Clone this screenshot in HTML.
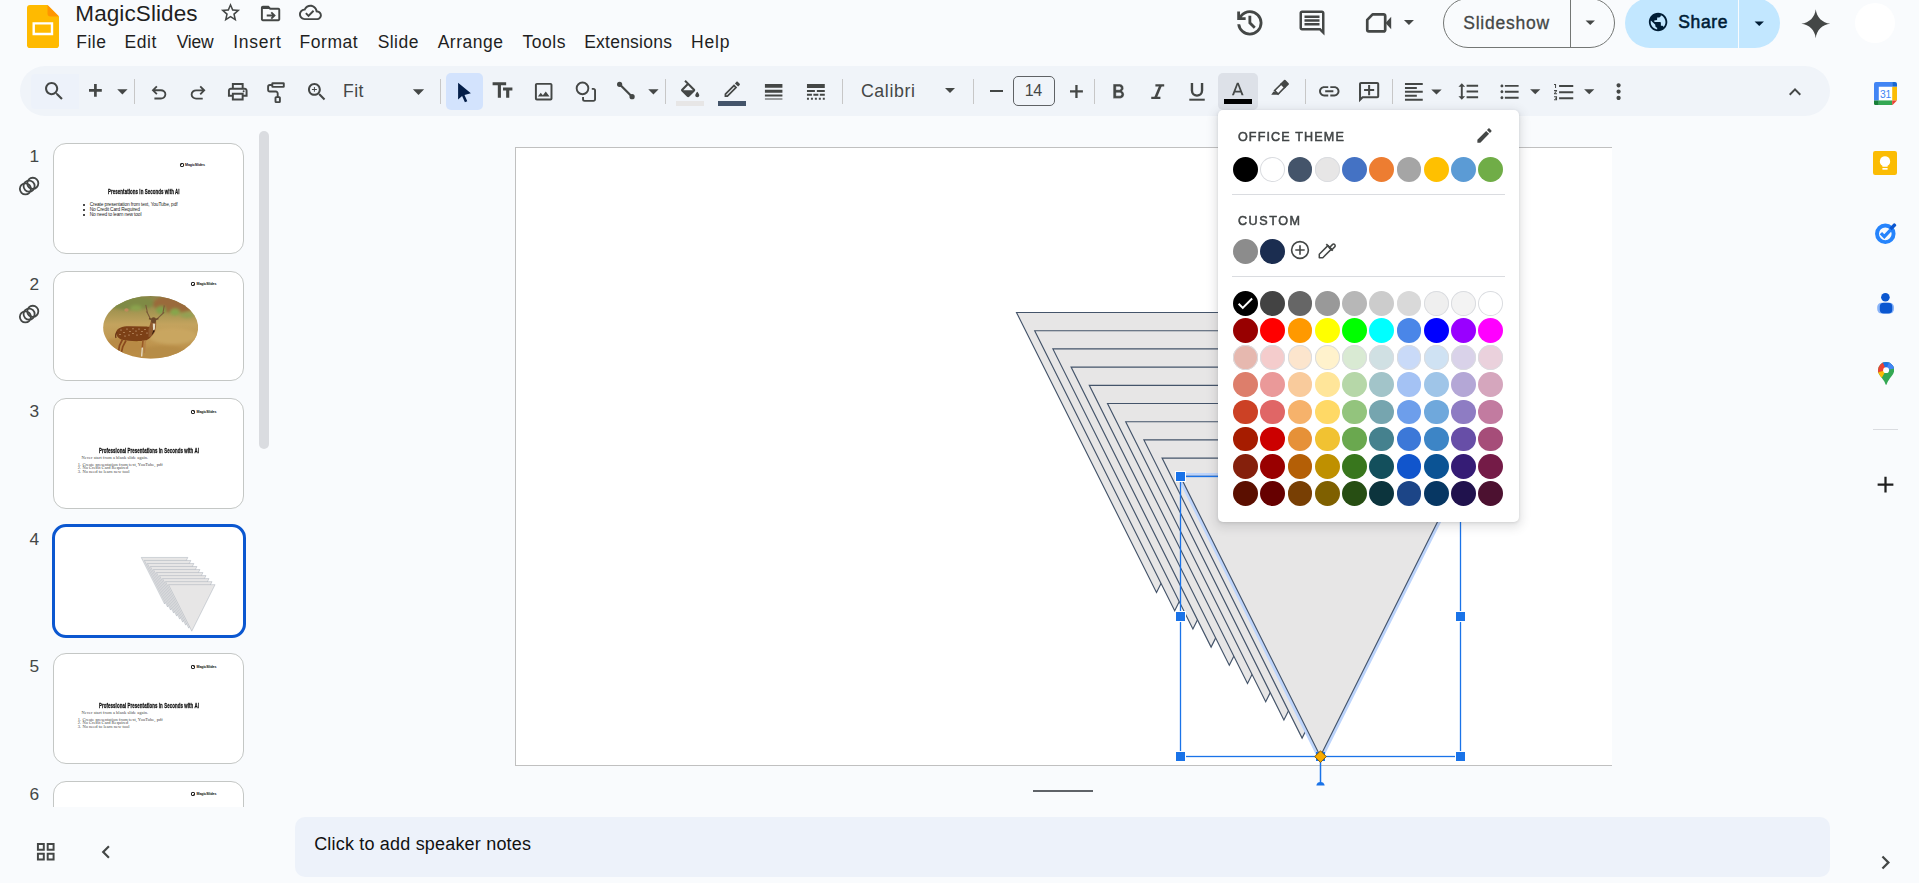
<!DOCTYPE html><html><head><meta charset="utf-8"><title>MagicSlides - Google Slides</title><style>
*{box-sizing:border-box;margin:0;padding:0}
html,body{width:1919px;height:883px;overflow:hidden;background:#f9fbfd;font-family:"Liberation Sans",sans-serif}
.ic{position:absolute;display:block}
.t{position:absolute;white-space:nowrap}
.abs{position:absolute}
.sep{position:absolute;width:1px;background:#c7c7c7;top:79px;height:25px}
</style></head><body>
<svg class="ic" style="left:26.8px;top:4.5px;width:32px;height:43.2px" viewBox="0 0 32 43.2">
<path d="M3 0H20.5L32 11.5V40.200a3 3 0 0 1-3 3H3a3 3 0 0 1-3-3V3a3 3 0 0 1 3-3z" fill="#ffba00"/>
<path d="M20.5 0L32 11.500H23.500a3 3 0 0 1-3-3z" fill="#ff9500"/>
<path d="M5.5 17.2h20.7v13H5.5zM7.900 19.600v8.200h15.900v-8.200z" fill="#fff" fill-rule="evenodd"/>
</svg>
<div class="t k ttl" style="left:75.31px;top:0.74px;font-size:22.5px;line-height:25.85px;color:#1f1f1f;font-weight:400;letter-spacing:0.097px;">MagicSlides</div>
<svg class="ic" style="left:219.04px;top:1.12px;width:23.02px;height:23.02px" viewBox="0 0 24 24" fill="#444746"><path d="M22 9.24l-7.19-.62L12 2 9.19 8.630 2 9.240l5.46 4.73L5.82 21 12 17.270 18.180 21l-1.630-7.030L22 9.240zM12 15.400l-3.760 2.270 1-4.280-3.320-2.880 4.380-.380L12 6.100l1.710 4.040 4.380.380-3.320 2.880 1 4.280L12 15.400z"/></svg>
<svg class="ic" style="left:258.91px;top:1.86px;width:23.17px;height:23.17px" viewBox="0 0 24 24" fill="#444746"><path d="M2 7.300H12V6l-2-2H4.500A2.500 2.500 0 0 0 2 6.500z M20 6h-8l-2-2H4c-1.1 0-2 .9-2 2v12c0 1.1.9 2 2 2h16c1.1 0 2-.9 2-2V8c0-1.1-.9-2-2-2zm0 12H4V6h5.170l2 2H20v10zm-7.990-1.410L13.420 18l4-4-4-4-1.410 1.410L13.590 13H8v2h5.590z"/></svg>
<svg class="ic" style="left:299.18px;top:1.38px;width:22.85px;height:22.85px" viewBox="0 0 24 24" fill="#444746"><path d="M19.35 10.040C18.670 6.590 15.640 4 12 4 9.110 4 6.600 5.640 5.350 8.040 2.340 8.360 0 10.910 0 14c0 3.310 2.690 6 6 6h13c2.760 0 5-2.240 5-5 0-2.640-2.050-4.780-4.650-4.960zM19 18H6c-2.210 0-4-1.790-4-4 0-2.050 1.530-3.760 3.560-3.970l1.070-.110.500-.950C8.080 7.140 9.940 6 12 6c2.620 0 4.880 1.860 5.390 4.430l.300 1.500 1.530.110c1.560.100 2.780 1.410 2.780 2.960 0 1.650-1.350 3-3 3zm-9-3.820l-2.090-2.090L6.500 13.500 10 17l6.010-6.010-1.410-1.410z"/></svg>
<div class="t k mn" style="left:76.32px;top:31.96px;font-size:17.5px;line-height:20.11px;color:#1f1f1f;font-weight:400;letter-spacing:0.463px;">File</div>
<div class="t k mn" style="left:124.42px;top:31.96px;font-size:17.5px;line-height:20.11px;color:#1f1f1f;font-weight:400;letter-spacing:0.576px;">Edit</div>
<div class="t k mn" style="left:176.70px;top:31.96px;font-size:17.5px;line-height:20.11px;color:#1f1f1f;font-weight:400;letter-spacing:-0.242px;">View</div>
<div class="t k mn" style="left:233.20px;top:31.96px;font-size:17.5px;line-height:20.11px;color:#1f1f1f;font-weight:400;letter-spacing:0.760px;">Insert</div>
<div class="t k mn" style="left:299.56px;top:31.96px;font-size:17.5px;line-height:20.11px;color:#1f1f1f;font-weight:400;letter-spacing:0.527px;">Format</div>
<div class="t k mn" style="left:377.64px;top:31.96px;font-size:17.5px;line-height:20.11px;color:#1f1f1f;font-weight:400;letter-spacing:0.457px;">Slide</div>
<div class="t k mn" style="left:437.67px;top:31.96px;font-size:17.5px;line-height:20.11px;color:#1f1f1f;font-weight:400;letter-spacing:0.503px;">Arrange</div>
<div class="t k mn" style="left:522.56px;top:31.96px;font-size:17.5px;line-height:20.11px;color:#1f1f1f;font-weight:400;letter-spacing:0.518px;">Tools</div>
<div class="t k mn" style="left:584.13px;top:31.96px;font-size:17.5px;line-height:20.11px;color:#1f1f1f;font-weight:400;letter-spacing:0.247px;">Extensions</div>
<div class="t k mn" style="left:690.96px;top:31.96px;font-size:17.5px;line-height:20.11px;color:#1f1f1f;font-weight:400;letter-spacing:0.829px;">Help</div>
<svg class="ic" style="left:1232.63px;top:5.53px;width:33.73px;height:33.73px" viewBox="0 0 24 24" fill="#444746"><path d="M12 21q-3.45 0-6.012-2.287Q3.425 16.425 3.05 13H5.1q.35 2.6 2.313 4.3Q9.375 19 12 19q2.925 0 4.963-2.037Q19 14.925 19 12t-2.037-4.963Q14.925 5 12 5q-1.725 0-3.225.8Q7.275 6.6 6.25 8H9v2H3V4h2v2.35q1.275-1.6 3.113-2.475Q9.95 3 12 3q1.875 0 3.513.713 1.637.712 2.850 1.925 1.212 1.212 1.925 2.85Q21 10.125 21 12t-.712 3.513q-.713 1.637-1.925 2.85-1.213 1.212-2.850 1.925Q13.875 21 12 21Zm2.800-4.800L11 12.4V7h2v4.600l3.200 3.200Z"/></svg>
<svg class="ic" style="left:1296.50px;top:7.90px;width:30.00px;height:30.00px" viewBox="0 0 24 24" fill="#444746"><path d="M21.990 4c0-1.100-.890-2-1.990-2H4c-1.100 0-2 .900-2 2v12c0 1.100.900 2 2 2h14l4 4-.010-18zM20 4v13.170L18.830 16H4V4h16zM6 12h12v2H6zm0-3h12v2H6zm0-3h12v2H6z"/></svg>
<svg class="ic" style="left:1364px;top:10px;width:30px;height:26px" viewBox="1364 10 30 26"><path d="M1367.250 19.900L1372.600 14.350H1383.600a1.600 1.600 0 0 1 1.600 1.600V29.850a1.600 1.600 0 0 1-1.600 1.600H1368.850a1.600 1.600 0 0 1-1.600-1.600z" fill="none" stroke="#444746" stroke-width="2.700" stroke-linejoin="round"/><path d="M1385.500 22.900L1391.200 16.700V29.200z" fill="#444746"/></svg>
<svg class="ic" style="left:1397.01px;top:10.06px;width:23.88px;height:23.88px" viewBox="0 0 24 24" fill="#444746"><path d="M7 10l5 5 5-5z"/></svg>
<div class="abs" style="left:1443px;top:-2.5px;width:172px;height:50px;border:1px solid #747775;border-radius:25px"></div>
<div class="abs" style="left:1570px;top:-2px;width:1px;height:49px;background:#747775"></div>
<div class="t k ss" style="left:1463.26px;top:13.06px;font-size:17.5px;line-height:20.11px;color:#444746;font-weight:400;letter-spacing:0.779px;-webkit-text-stroke:.3px #444746;">Slideshow</div>
<svg class="ic" style="left:1579.25px;top:11.25px;width:22.5px;height:22.5px" viewBox="0 0 24 24" fill="#444746" ><path d="M7 10l5 5 5-5z"/></svg>
<div class="abs" style="left:1625px;top:-2.5px;width:155px;height:50.5px;background:#c2e7ff;border-radius:25px"></div>
<div class="abs" style="left:1738px;top:-2px;width:1px;height:50px;background:#f9fbfd"></div>
<svg class="ic" style="left:1646.60px;top:11.30px;width:22.2px;height:22.2px" viewBox="0 0 24 24" fill="#001d35" ><path d="M12 2C6.480 2 2 6.480 2 12s4.480 10 10 10 10-4.480 10-10S17.520 2 12 2zm-1 17.930c-3.950-.490-7-3.850-7-7.930 0-.620.080-1.210.210-1.790L9 15v1c0 1.100.900 2 2 2v1.930zm6.900-2.540c-.260-.810-1-1.390-1.900-1.390h-1v-3c0-.550-.450-1-1-1H8v-2h2c.550 0 1-.450 1-1V7h2c1.100 0 2-.900 2-2v-.410c2.930 1.190 5 4.060 5 7.410 0 2.080-.800 3.970-2.100 5.390z"/></svg>
<div class="t k sh" style="left:1678.34px;top:12.06px;font-size:17.5px;line-height:20.11px;color:#001d35;font-weight:400;letter-spacing:0.596px;-webkit-text-stroke:.55px #001d35;">Share</div>
<svg class="ic" style="left:1747.75px;top:11.75px;width:22.5px;height:22.5px" viewBox="0 0 24 24" fill="#001d35" ><path d="M7 10l5 5 5-5z"/></svg>
<svg class="ic" style="left:1799.85px;top:7.55px;width:31.5px;height:31.5px" viewBox="0 0 24 24" fill="#444746" ><path d="M12 1 C12.6 7 17 11.400 23 12 C17 12.600 12.600 17 12 23 C11.400 17 7 12.600 1 12 C7 11.400 11.400 7 12 1z"/></svg>
<div class="abs" style="left:1855px;top:3px;width:40px;height:40px;border-radius:50%;background:#fff"></div>
<div class="abs" style="left:20px;top:66px;width:1810px;height:49.5px;border-radius:25px;background:#f0f4f9"></div>
<div class="abs" style="left:31px;top:74px;width:47.5px;height:34.5px;background:#edf2fa;border-radius:4px 0 0 4px"></div>
<div class="abs" style="left:445.800px;top:73px;width:37.100px;height:37px;border-radius:5px;background:#d3e3fd"></div>
<div class="abs" style="left:1218.100px;top:73.200px;width:39.800px;height:36.400px;border-radius:5px;background:#dde1e8"></div>
<svg class="ic" style="left:41.96px;top:79.06px;width:24.29px;height:24.29px" viewBox="0 0 24 24" fill="#444746"><path d="M15.5 14h-.79l-.28-.27C15.41 12.59 16 11.11 16 9.5 16 5.91 13.09 3 9.5 3S3 5.91 3 9.5 5.91 16 9.5 16c1.61 0 3.09-.59 4.23-1.57l.27.28v.79l5 4.99L20.49 19l-4.99-5zm-6 0C7.01 14 5 11.99 5 9.5S7.01 5 9.5 5 14 7.01 14 9.5 11.99 14 9.5 14z"/></svg>
<svg class="ic" style="left:88.800px;top:84px;width:12.800px;height:12.800px" viewBox="0 0 12.800 12.800"><path d="M0 6.400h12.800M6.400 0v12.800" stroke="#444746" stroke-width="2.700" fill="none"/></svg>
<svg class="ic" style="left:109.53px;top:78.69px;width:24.78px;height:24.78px" viewBox="0 0 24 24" fill="#444746"><path d="M7 10l5 5 5-5z"/></svg>
<svg class="ic" style="left:147.76px;top:81.97px;width:21.97px;height:21.97px" viewBox="0 0 24 24" fill="#444746"><path d="M7 19v-2h7.1q1.575 0 2.737-1Q18 15 18 13.5T16.837 11Q15.675 10 14.1 10H7.8l2.6 2.6L9 14 4 9l5-5 1.4 1.4L7.8 8h6.3q2.425 0 4.163 1.575Q20 11.15 20 13.5q0 2.35-1.737 3.925Q16.525 19 14.1 19Z"/></svg>
<svg class="ic" style="left:186.70px;top:81.81px;width:22.20px;height:22.20px" viewBox="0 0 24 24" fill="#444746"><path d="M9.9 19q-2.425 0-4.163-1.575Q4 15.85 4 13.5q0-2.35 1.737-3.925Q7.475 8 9.9 8h6.3l-2.6-2.6L15 4l5 5-5 5-1.4-1.4 2.6-2.6H9.9q-1.575 0-2.737 1Q6 12 6 13.5T7.163 16q1.162 1 2.737 1H17v2Z"/></svg>
<svg class="ic" style="left:225.84px;top:79.69px;width:23.52px;height:23.52px" viewBox="0 0 24 24" fill="#444746"><path d="M19 8h-1V3H6v5H5c-1.66 0-3 1.34-3 3v6h4v4h12v-4h4v-6c0-1.66-1.34-3-3-3zM8 5h8v3H8V5zm8 12v2H8v-4h8v2zm2-2v-2H6v2H4v-4c0-.55.45-1 1-1h14c.55 0 1 .45 1 1v4h-2z M17 11.5a1 1 0 1 0 2 0a1 1 0 1 0-2 0z"/></svg>
<svg class="ic" style="left:264px;top:80px;width:24px;height:24px" viewBox="0 0 24 24" fill="none" stroke="#444746" stroke-width="1.900" stroke-linejoin="round"><rect x="8.300" y="3.200" width="11.500" height="3.700" rx=".4"/><path d="M8.300 5H5.900a1.800 1.800 0 0 0-1.800 1.800v2.900a1.800 1.800 0 0 0 1.800 1.800h5.900a1.900 1.900 0 0 1 1.900 1.900v3.500"/><rect x="11.500" y="17.100" width="4.400" height="5" rx=".6"/></svg>
<svg class="ic" style="left:304.63px;top:79.83px;width:23.74px;height:23.74px" viewBox="0 0 24 24" fill="#444746"><path d="M15.5 14h-.79l-.28-.27C15.41 12.59 16 11.11 16 9.5 16 5.91 13.09 3 9.5 3S3 5.91 3 9.5 5.91 16 9.5 16c1.61 0 3.09-.59 4.23-1.57l.27.28v.79l5 4.99L20.49 19l-4.99-5zm-6 0C7.01 14 5 11.99 5 9.5S7.01 5 9.5 5 14 7.01 14 9.5 11.99 14 9.5 14zm.5-7H9v2H7v1h2v2h1v-2h2V9h-2z"/></svg>
<svg class="ic" style="left:405.05px;top:77.74px;width:27.00px;height:27.00px" viewBox="0 0 24 24" fill="#444746"><path d="M7 10l5 5 5-5z"/></svg>
<svg class="ic" style="left:451px;top:79.500px;width:24px;height:24px" viewBox="0 0 24 24"><path d="M7.100 2.700V19.400L11.100 15.900 13.900 22.300 16.300 21.200 13.500 14.900 19.900 13.200z" fill="#041e49"/></svg>
<svg class="ic" style="left:490.09px;top:78.42px;width:25.01px;height:25.01px" viewBox="0 0 24 24" fill="#444746"><path d="M2.5 4v3h5v12h3V7h5V4h-13zm19 5h-9v3h3v7h3v-7h3V9z"/></svg>
<svg class="ic" style="left:531.80px;top:80.20px;width:23.40px;height:23.40px" viewBox="0 0 24 24" fill="#444746"><path d="M19 5v14H5V5h14m0-2H5c-1.1 0-2 .9-2 2v14c0 1.1.9 2 2 2h14c1.1 0 2-.9 2-2V5c0-1.1-.9-2-2-2zm-4.86 8.86l-3 3.87L9 13.14 6 17h12l-3.86-5.14z"/></svg>
<svg class="ic" style="left:574px;top:80px;width:24px;height:24px" viewBox="574 80 24 24" fill="none" stroke="#444746" stroke-width="1.900"><circle cx="582.500" cy="88.350" r="5.850"/><path d="M591.800 88.850H593.500a1.550 1.550 0 0 1 1.550 1.550V99.300a1.550 1.550 0 0 1-1.550 1.550H584.600a1.550 1.550 0 0 1-1.550-1.550V97.100"/></svg>
<svg class="ic" style="left:614px;top:80px;width:24px;height:24px" viewBox="614 80 24 24"><path d="M619.600 84.300L632.100 96.700" stroke="#444746" stroke-width="2.300"/><circle cx="619.600" cy="84.300" r="2.600" fill="#444746"/><circle cx="632.100" cy="96.700" r="2.600" fill="#444746"/></svg>
<svg class="ic" style="left:640.63px;top:78.66px;width:24.84px;height:24.84px" viewBox="0 0 24 24" fill="#444746"><path d="M7 10l5 5 5-5z"/></svg>
<svg class="ic" style="left:677.83px;top:79.93px;width:24.34px;height:24.34px" viewBox="0 0 24 24" fill="#444746"><path d="M16.56 8.94L7.62 0 6.21 1.41l2.38 2.38-5.15 5.15c-.59.59-.59 1.54 0 2.12l5.5 5.5c.29.29.68.44 1.06.44s.77-.15 1.06-.44l5.5-5.5c.59-.58.59-1.53 0-2.12zM5.21 10L10 5.21 14.79 10H5.21zM19 11.5s-2 2.17-2 3.500c0 1.1.9 2 2 2s2-.9 2-2c0-1.33-2-3.5-2-3.5z"/></svg>
<div class="abs" style="left:676px;top:101px;width:28px;height:4.800px;background:#e7e6e6"></div>
<svg class="ic" style="left:721.83px;top:79.33px;width:20.53px;height:20.53px" viewBox="0 0 24 24" fill="#444746"><path d="M14.06 9.02l.92.92L5.92 19H5v-.92l9.060-9.060M17.660 3c-.25 0-.51.1-.7.29l-1.830 1.830 3.750 3.750 1.830-1.830c.39-.39.39-1.020 0-1.410l-2.340-2.340c-.2-.2-.45-.29-.71-.29zm-3.600 3.190L3 17.250V21h3.750L17.810 9.940l-3.750-3.750z"/></svg>
<div class="abs" style="left:718px;top:101px;width:28px;height:4.800px;background:#44546a"></div>
<svg class="ic" style="left:762.28px;top:79.93px;width:23.33px;height:23.33px" viewBox="0 0 24 24" fill="#444746"><path d="M3 17h18v-2H3v2zm0 3h18v-1H3v1zm0-7h18v-3H3v3zm0-9v4h18V4H3z"/></svg>
<svg class="ic" style="left:804.38px;top:80.00px;width:23.75px;height:23.75px" viewBox="0 0 24 24" fill="#444746"><path d="M3 16h5v-2H3v2zm6.5 0h5v-2h-5v2zm6.5 0h5v-2h-5v2zM3 20h2v-2H3v2zm4 0h2v-2H7v2zm4 0h2v-2h-2v2zm4 0h2v-2h-2v2zm4 0h2v-2h-2v2zM3 12h8v-2H3v2zm10 0h8v-2h-8v2zM3 4v4h18V4H3z"/></svg>
<svg class="ic" style="left:938.00px;top:77.90px;width:24.00px;height:24.00px" viewBox="0 0 24 24" fill="#444746"><path d="M7 10l5 5 5-5z"/></svg>
<div class="abs" style="left:990px;top:90px;width:12.900px;height:2.300px;background:#444746"></div>
<svg class="ic" style="left:1070px;top:85px;width:12.900px;height:12.900px" viewBox="0 0 12.900 12.900"><path d="M0 6.450h12.900M6.450 0v12.900" stroke="#444746" stroke-width="2.300" fill="none"/></svg>
<svg class="ic" style="left:1105.55px;top:79.70px;width:24.54px;height:24.54px" viewBox="0 0 24 24" fill="#444746"><path d="M15.6 10.79c.97-.67 1.65-1.77 1.65-2.79 0-2.26-1.75-4-4-4H7v14h7.04c2.09 0 3.71-1.7 3.71-3.79 0-1.52-.86-2.82-2.15-3.42zM10 6.5h3c.83 0 1.5.67 1.5 1.5s-.67 1.5-1.5 1.500h-3v-3zm3.5 9H10v-3h3.5c.83 0 1.5.67 1.5 1.500s-.67 1.5-1.5 1.5z" stroke="#f0f4f9" stroke-width="0.35"/></svg>
<svg class="ic" style="left:1146px;top:80px;width:24px;height:24px" viewBox="1146 80 24 24" fill="none" stroke="#444746"><path d="M1155.400 85.300h8.800M1151.250 97.900h9.150" stroke-width="2.200"/><path d="M1160.700 85.300l-5.300 12.600" stroke-width="2.600"/></svg>
<svg class="ic" style="left:1185px;top:80px;width:24px;height:24px" viewBox="1185 80 24 24" fill="none" stroke="#444746"><path d="M1191.950 82.900v7.700a5.050 5.050 0 0 0 10.100 0v-7.700" stroke-width="2.400"/><path d="M1189.300 99.700h15.450" stroke-width="2"/></svg>
<svg class="ic" style="left:1227.39px;top:79.58px;width:21.52px;height:21.52px" viewBox="0 0 24 24" fill="#444746"><path d="M11 3L5.5 17h2.25l1.12-3h6.25l1.12 3h2.25L13 3h-2zm-1.38 9L12 5.67 14.38 12H9.62z"/></svg>
<div class="abs" style="left:1223.750px;top:99px;width:28.300px;height:5px;background:#000"></div>
<svg class="ic" style="left:1268px;top:76px;width:24px;height:24px" viewBox="1268 76 24 24"><g transform="translate(1275.800 92.900) rotate(-45)"><rect x=".8" y="-2.450" width="9.500" height="4.900" fill="#f8fafd" stroke="#444746" stroke-width="1.600"/><path d="M9.300 -3.250H14.900a1 1 0 0 1 1 1V2.250a1 1 0 0 1-1 1H9.300z" fill="#444746"/></g><path d="M1273.500 91.500L1271.250 94.800H1277.700L1279.800 93.500z" fill="#444746"/></svg>
<svg class="ic" style="left:1316.83px;top:79.26px;width:24.54px;height:24.54px" viewBox="0 0 24 24" fill="#444746"><path d="M3.9 12c0-1.71 1.39-3.1 3.1-3.1h4V7H7c-2.76 0-5 2.24-5 5s2.24 5 5 5h4v-1.9H7c-1.71 0-3.100-1.39-3.100-3.1zM8 13h8v-2H8v2zm9-6h-4v1.9h4c1.71 0 3.100 1.39 3.1 3.100s-1.39 3.1-3.1 3.100h-4V17h4c2.76 0 5-2.24 5-5s-2.24-5-5-5z"/></svg>
<svg class="ic" style="left:1356.53px;top:79.83px;width:24.24px;height:24.24px" viewBox="0 0 24 24" fill="#444746"><path d="M22 4c0-1.1-.9-2-2-2H4c-1.1 0-2 .9-2 2v12c0 1.100.9 2 2 2h14l4 4V4zm-2 13.17L18.83 16H4V4h16v13.170zM13 5h-2v4H7v2h4v4h2v-4h4V9h-4z" transform="translate(24 0) scale(-1 1)"/></svg>
<svg class="ic" style="left:1402.18px;top:79.98px;width:23.73px;height:23.73px" viewBox="0 0 24 24" fill="#444746"><path d="M15 15H3v2h12v-2zm0-8H3v2h12V7zM3 13h18v-2H3v2zm0 8h18v-2H3v2zM3 3v2h18V3H3z"/></svg>
<svg class="ic" style="left:1424.42px;top:78.60px;width:24.96px;height:24.96px" viewBox="0 0 24 24" fill="#444746"><path d="M7 10l5 5 5-5z"/></svg>
<svg class="ic" style="left:1456.57px;top:80.18px;width:23.04px;height:23.04px" viewBox="0 0 24 24" fill="#444746"><path d="M6 7h2.5L5 3.5 1.5 7H4v10H1.5L5 20.5 8.500 17H6V7zm4-2v2h12V5H10zm0 14h12v-2H10v2zm0-6h12v-2H10v2z"/></svg>
<svg class="ic" style="left:1498.36px;top:79.87px;width:23.57px;height:23.57px" viewBox="0 0 24 24" fill="#444746"><path d="M4 10.5c-.83 0-1.5.67-1.5 1.500s.67 1.5 1.500 1.5 1.5-.67 1.500-1.5-.67-1.5-1.500-1.5zm0-6c-.83 0-1.5.67-1.5 1.500S3.17 7.5 4 7.500 5.500 6.83 5.500 6 4.830 4.500 4 4.500zm0 12c-.83 0-1.5.68-1.5 1.500s.68 1.5 1.500 1.5 1.5-.68 1.500-1.5-.67-1.5-1.500-1.5zM7 19h14v-2H7v2zm0-6h14v-2H7v2zm0-8v2h14V5H7z"/></svg>
<svg class="ic" style="left:1523.16px;top:78.85px;width:24.48px;height:24.48px" viewBox="0 0 24 24" fill="#444746"><path d="M7 10l5 5 5-5z"/></svg>
<svg class="ic" style="left:1552.00px;top:79.80px;width:24.30px;height:24.30px" viewBox="0 0 24 24" fill="#444746"><path d="M2 17h2v.5H3v1h1v.5H2v1h3v-4H2v1zm1-9h1V4H2v1h1v3zm-1 3h1.8L2 13.1v.9h3v-1H3.2L5 10.900V10H2v1zm5-6v2h14V5H7zm0 14h14v-2H7v2zm0-6h14v-2H7v2z"/></svg>
<svg class="ic" style="left:1576.96px;top:78.85px;width:24.48px;height:24.48px" viewBox="0 0 24 24" fill="#444746"><path d="M7 10l5 5 5-5z"/></svg>
<svg class="ic" style="left:1605.50px;top:79.00px;width:25.20px;height:25.20px" viewBox="0 0 24 24" fill="#444746"><path d="M12 8c1.1 0 2-.9 2-2s-.9-2-2-2-2 .9-2 2 .9 2 2 2zm0 2c-1.1 0-2 .9-2 2s.9 2 2 2 2-.9 2-2-.9-2-2-2zm0 6c-1.1 0-2 .9-2 2s.9 2 2 2 2-.9 2-2-.9-2-2-2z"/></svg>
<svg class="ic" style="left:1783.00px;top:79.50px;width:24px;height:24px" viewBox="0 0 24 24" fill="#444746" ><path d="M12 8l-6 6 1.41 1.41L12 10.830l4.59 4.58L18 14z"/></svg>
<div class="sep" style="left:133.8px"></div>
<div class="sep" style="left:439.9px"></div>
<div class="sep" style="left:664.9px"></div>
<div class="sep" style="left:842.0px"></div>
<div class="sep" style="left:972.8px"></div>
<div class="sep" style="left:1094.1px"></div>
<div class="sep" style="left:1304.9px"></div>
<div class="sep" style="left:1391.8px"></div>
<div class="t k fit" style="left:342.88px;top:80.87px;font-size:17.6px;line-height:20.22px;color:#444746;font-weight:400;letter-spacing:0.506px;">Fit</div>
<div class="t k cal" style="left:860.89px;top:80.69px;font-size:17.8px;line-height:20.45px;color:#444746;font-weight:400;letter-spacing:0.628px;">Calibri</div>
<div class="abs" style="left:1012.750px;top:76px;width:42.250px;height:30px;border:1.300px solid #5f6265;border-radius:5px"></div>
<div class="t k fs" style="left:1024.66px;top:82.32px;font-size:16px;line-height:18.38px;color:#444746;font-weight:400;letter-spacing:-0.243px;">14</div>
<div class="abs" style="left:0;top:125px;width:290px;height:682px;overflow:hidden">
<div class="t num" style="right:251px;top:21.40px;font-size:17.300px;line-height:20px;color:#444746">1</div>
<div class="abs" style="left:53px;top:18px;width:191px;height:110.7px;border:1px solid #c4c7c5;border-radius:13px;background:#fff;overflow:hidden"><div class="abs" style="left:-1px;top:-1px"><div class="t" style="left:126.5px;top:19.5px;font-size:3.600px;font-weight:700;color:#111;letter-spacing:-.08px;font-family:'Liberation Sans',sans-serif"><span style="display:inline-block;width:4.400px;height:4.200px;border:.75px solid #111;border-radius:1.100px;vertical-align:-0.900px;margin-right:1.100px;background:linear-gradient(#111,#111) 40% 35%/45% 30% no-repeat"></span>MagicSlides</div><div class="t" style="left:55.200px;top:46.100px;font-size:5.600px;font-weight:700;color:#111;transform:scale(.785,1.170);transform-origin:0 50%;letter-spacing:.1px;-webkit-text-stroke:.22px #111">Presentations in Seconds with AI</div><div class="abs" style="left:29.700px;top:61.10px;width:2px;height:2px;border-radius:50%;background:#111"></div><div class="t" style="left:36.700px;top:58.90px;font-size:4.800px;color:#222;letter-spacing:-.12px">Create presentation from text, YouTube, pdf</div><div class="abs" style="left:29.700px;top:66.26px;width:2px;height:2px;border-radius:50%;background:#111"></div><div class="t" style="left:36.700px;top:64.06px;font-size:4.800px;color:#222;letter-spacing:-.12px">No Credit Card Required</div><div class="abs" style="left:29.700px;top:71.42px;width:2px;height:2px;border-radius:50%;background:#111"></div><div class="t" style="left:36.700px;top:69.22px;font-size:4.800px;color:#222;letter-spacing:-.12px">No need to learn new tool</div></div></div>
<div class="t num" style="right:251px;top:148.90px;font-size:17.300px;line-height:20px;color:#444746">2</div>
<div class="abs" style="left:53px;top:145.5px;width:191px;height:110.7px;border:1px solid #c4c7c5;border-radius:13px;background:#fff;overflow:hidden"><div class="abs" style="left:-1px;top:-1px"><div class="t" style="left:138px;top:11.6px;font-size:3.600px;font-weight:700;color:#111;letter-spacing:-.08px;font-family:'Liberation Sans',sans-serif"><span style="display:inline-block;width:4.400px;height:4.200px;border:.75px solid #111;border-radius:1.100px;vertical-align:-0.900px;margin-right:1.100px;background:linear-gradient(#111,#111) 40% 35%/45% 30% no-repeat"></span>MagicSlides</div><svg class="ic" style="left:50px;top:25.500px;width:95.300px;height:62.800px" viewBox="0 0 95.300 62.800">
<defs><clipPath id="ov"><ellipse cx="47.650" cy="31.400" rx="47.500" ry="31.300"/></clipPath>
<linearGradient id="gr" x1="0" y1="0" x2="0" y2="1"><stop offset="0" stop-color="#8b8347"/><stop offset=".28" stop-color="#a99753"/><stop offset=".45" stop-color="#c3a35e"/><stop offset=".75" stop-color="#bf9650"/><stop offset="1" stop-color="#b98a42"/></linearGradient>
<filter id="bl" x="-20%" y="-20%" width="140%" height="140%"><feGaussianBlur stdDeviation="1.600"/></filter><filter id="bl2"><feGaussianBlur stdDeviation=".35"/></filter></defs>
<g clip-path="url(#ov)"><rect width="95.300" height="62.800" fill="url(#gr)"/>
<g filter="url(#bl)"><ellipse cx="28" cy="7" rx="24" ry="7" fill="#7f8a45"/><ellipse cx="72" cy="8" rx="22" ry="9" fill="#9a6a3a"/><ellipse cx="58" cy="14" rx="5" ry="4" fill="#7fa04a"/><ellipse cx="72" cy="16" rx="5" ry="3.500" fill="#86a64c"/><ellipse cx="33" cy="12" rx="6" ry="3" fill="#8aa24e"/><ellipse cx="84" cy="19" rx="7" ry="3" fill="#93a052"/>
<ellipse cx="20" cy="50" rx="22" ry="8" fill="#b88a44"/><ellipse cx="70" cy="40" rx="24" ry="8" fill="#c9a661"/><ellipse cx="60" cy="56" rx="24" ry="6" fill="#b68c46"/></g>
<ellipse cx="23.500" cy="14" rx="2.200" ry="1.800" fill="#c08a5a" filter="url(#bl2)"/>
<g filter="url(#bl2)">
<path d="M42.750 8.900 L44.500 17 L47.300 22.800 M61.300 9.300 L59.800 17.500 L54.200 22.800 M44.500 17l-1.200-1.500 M59.800 17.500l1.400-1.200" stroke="#7a5a38" stroke-width="1.100" fill="none"/>
<path d="M13 36.500 C14 31.500 20 30 27 30.200 L42 30.500 C46 30.500 49 31 51.500 34.500 C50 39 47 43 43.500 44.200 L38 45 C30 45.500 24 44.500 20 44 C16 43 13.500 41 13 36.500z" fill="#7b3f19"/>
<path d="M45.500 33 C46.500 30 47.500 27 48 24.500 L53 24.800 C53.500 28 53 32 52 35.500 C50.500 39 48 41 45.500 41z" fill="#8f5a2e"/>
<path d="M49.800 27.500l2.400.2-.3 5.500-1.800 1.500z" fill="#e6dcc6"/>
<ellipse cx="50.600" cy="24.200" rx="2.500" ry="2.900" fill="#6d4a2c"/><path d="M46 22.500l2.800 1 M55.400 22.500l-2.800 1" stroke="#6d4a2c" stroke-width="1.500"/>
<path d="M48.500 39.500C50 37.500 51.200 36 51.700 34.800L50.500 34z" fill="#2a170c"/>
<path d="M14.200 36c-1.600 1.500-1.800 4-1.200 6" stroke="#6a3515" stroke-width="1.300" fill="none"/>
<path d="M19.500 43.500L16.500 49.500 15.300 56.500 M23 44.500L19.800 50.500 18.500 56" stroke="#8a4a1e" stroke-width="1.700" fill="none"/>
<path d="M40 44.500L39.300 52" stroke="#9a5a28" stroke-width="1.700" fill="none"/><path d="M39.300 51.500L38.700 60.500" stroke="#e9dfcc" stroke-width="1.300"/><path d="M42.200 44.200L41.500 57" stroke="#b27c44" stroke-width="1.200"/>
<g fill="#e9c99a"><circle cx="18" cy="34" r=".55"/><circle cx="21" cy="36.500" r=".55"/><circle cx="24" cy="33" r=".55"/><circle cx="27" cy="35.500" r=".55"/><circle cx="30" cy="32.800" r=".55"/><circle cx="33" cy="35" r=".55"/><circle cx="36" cy="33" r=".55"/><circle cx="39" cy="35.500" r=".55"/><circle cx="42" cy="33.500" r=".55"/><circle cx="22" cy="40" r=".55"/><circle cx="26" cy="39" r=".55"/><circle cx="30" cy="37.500" r=".55"/><circle cx="34" cy="39" r=".55"/><circle cx="38" cy="38.500" r=".55"/><circle cx="44" cy="37" r=".55"/><circle cx="17" cy="38.500" r=".55"/></g>
</g></g></svg></div></div>
<div class="t num" style="right:251px;top:276.40px;font-size:17.300px;line-height:20px;color:#444746">3</div>
<div class="abs" style="left:53px;top:273px;width:191px;height:110.7px;border:1px solid #c4c7c5;border-radius:13px;background:#fff;overflow:hidden"><div class="abs" style="left:-1px;top:-1px"><div class="t" style="left:138px;top:11.6px;font-size:3.600px;font-weight:700;color:#111;letter-spacing:-.08px;font-family:'Liberation Sans',sans-serif"><span style="display:inline-block;width:4.400px;height:4.200px;border:.75px solid #111;border-radius:1.100px;vertical-align:-0.900px;margin-right:1.100px;background:linear-gradient(#111,#111) 40% 35%/45% 30% no-repeat"></span>MagicSlides</div><div class="t" style="left:45.700px;top:49.600px;font-size:5.600px;font-weight:700;color:#111;transform:scale(.783,1.170);transform-origin:0 50%;letter-spacing:.1px;-webkit-text-stroke:.22px #111">Professional Presentations in Seconds with AI</div><div class="t" style="left:28.500px;top:57.300px;font-size:4.460px;color:#444;font-family:'Liberation Serif',serif;letter-spacing:.05px">Never start from a blank slide again.</div><div class="t" style="left:24.800px;top:64.2px;font-size:4.440px;color:#444;font-family:'Liberation Serif',serif;letter-spacing:.05px">1. Create presentation from text, YouTube, pdf</div><div class="t" style="left:24.800px;top:67px;font-size:4.440px;color:#444;font-family:'Liberation Serif',serif;letter-spacing:.05px">2. No Credit Card Required</div><div class="t" style="left:24.800px;top:71.2px;font-size:4.440px;color:#444;font-family:'Liberation Serif',serif;letter-spacing:.05px">3. No need to learn new tool</div></div></div>
<div class="t num" style="right:251px;top:403.90px;font-size:17.300px;line-height:20px;color:#444746">4</div>
<div class="abs" style="left:51.500px;top:398.50px;width:194.500px;height:114.700px;border:3.300px solid #0b57d0;border-radius:14px;background:#fff"></div>
<div class="abs" style="left:53.500px;top:400.5px;width:191px;height:110.7px;overflow:hidden;border-radius:12px"><svg class="ic" style="left:4.100px;top:4.100px;width:182.200px;height:102.500px" viewBox="0 0 1096 616.500"><path d="M501.0 165.0h280l-140 280z" fill="#e7e6e6" stroke="#9aa2b0" stroke-width="2.500"/><path d="M519.2 183.2h280l-140 280z" fill="#e7e6e6" stroke="#9aa2b0" stroke-width="2.500"/><path d="M537.4 201.4h280l-140 280z" fill="#e7e6e6" stroke="#9aa2b0" stroke-width="2.500"/><path d="M555.6 219.6h280l-140 280z" fill="#e7e6e6" stroke="#9aa2b0" stroke-width="2.500"/><path d="M573.8 237.8h280l-140 280z" fill="#e7e6e6" stroke="#9aa2b0" stroke-width="2.500"/><path d="M592.0 256.0h280l-140 280z" fill="#e7e6e6" stroke="#9aa2b0" stroke-width="2.500"/><path d="M610.2 274.2h280l-140 280z" fill="#e7e6e6" stroke="#9aa2b0" stroke-width="2.500"/><path d="M628.4 292.4h280l-140 280z" fill="#e7e6e6" stroke="#9aa2b0" stroke-width="2.500"/><path d="M646.6 310.6h280l-140 280z" fill="#e7e6e6" stroke="#9aa2b0" stroke-width="2.500"/><path d="M664.8 328.8h280l-140 280z" fill="#e7e6e6" stroke="#9aa2b0" stroke-width="2.500"/></svg></div>
<div class="t num" style="right:251px;top:531.40px;font-size:17.300px;line-height:20px;color:#444746">5</div>
<div class="abs" style="left:53px;top:528px;width:191px;height:110.7px;border:1px solid #c4c7c5;border-radius:13px;background:#fff;overflow:hidden"><div class="abs" style="left:-1px;top:-1px"><div class="t" style="left:138px;top:11.6px;font-size:3.600px;font-weight:700;color:#111;letter-spacing:-.08px;font-family:'Liberation Sans',sans-serif"><span style="display:inline-block;width:4.400px;height:4.200px;border:.75px solid #111;border-radius:1.100px;vertical-align:-0.900px;margin-right:1.100px;background:linear-gradient(#111,#111) 40% 35%/45% 30% no-repeat"></span>MagicSlides</div><div class="t" style="left:45.700px;top:49.600px;font-size:5.600px;font-weight:700;color:#111;transform:scale(.783,1.170);transform-origin:0 50%;letter-spacing:.1px;-webkit-text-stroke:.22px #111">Professional Presentations in Seconds with AI</div><div class="t" style="left:28.500px;top:57.300px;font-size:4.460px;color:#444;font-family:'Liberation Serif',serif;letter-spacing:.05px">Never start from a blank slide again.</div><div class="t" style="left:24.800px;top:64.2px;font-size:4.440px;color:#444;font-family:'Liberation Serif',serif;letter-spacing:.05px">1. Create presentation from text, YouTube, pdf</div><div class="t" style="left:24.800px;top:67px;font-size:4.440px;color:#444;font-family:'Liberation Serif',serif;letter-spacing:.05px">2. No Credit Card Required</div><div class="t" style="left:24.800px;top:71.2px;font-size:4.440px;color:#444;font-family:'Liberation Serif',serif;letter-spacing:.05px">3. No need to learn new tool</div></div></div>
<div class="t num" style="right:251px;top:658.90px;font-size:17.300px;line-height:20px;color:#444746">6</div>
<div class="abs" style="left:53px;top:655.5px;width:191px;height:110.7px;border:1px solid #c4c7c5;border-radius:13px;background:#fff;overflow:hidden"><div class="abs" style="left:-1px;top:-1px"><div class="t" style="left:138px;top:11.6px;font-size:3.600px;font-weight:700;color:#111;letter-spacing:-.08px;font-family:'Liberation Sans',sans-serif"><span style="display:inline-block;width:4.400px;height:4.200px;border:.75px solid #111;border-radius:1.100px;vertical-align:-0.900px;margin-right:1.100px;background:linear-gradient(#111,#111) 40% 35%/45% 30% no-repeat"></span>MagicSlides</div></div></div>
<svg class="ic" style="left:17.9px;top:49.6px;width:22.200px;height:22.200px" viewBox="0 0 24 24" fill="none" stroke="#444746" stroke-width="1.950"><circle cx="8" cy="15" r="6"/><circle cx="12" cy="12" r="6"/><circle cx="16" cy="9" r="6"/></svg>
<svg class="ic" style="left:17.9px;top:177.6px;width:22.200px;height:22.200px" viewBox="0 0 24 24" fill="none" stroke="#444746" stroke-width="1.950"><circle cx="8" cy="15" r="6"/><circle cx="12" cy="12" r="6"/><circle cx="16" cy="9" r="6"/></svg>
<div class="abs" style="left:259px;top:6px;width:9.500px;height:318px;border-radius:5px;background:#dadce0"></div>
</div>
<svg class="ic" style="left:33.65px;top:839.95px;width:23.5px;height:23.5px" viewBox="0 0 24 24" fill="#444746" ><path d="M3 3v8h8V3H3zm6 6H5V5h4v4zm-6 4v8h8v-8H3zm6 6H5v-4h4v4zm4-16v8h8V3h-8zm6 6h-4V5h4v4zm-6 4v8h8v-8h-8zm6 6h-4v-4h4v4z"/></svg>
<svg class="ic" style="left:93.00px;top:838.60px;width:26px;height:26px" viewBox="0 0 24 24" fill="#444746" ><path d="M15.41 7.41L14 6l-6 6 6 6 1.41-1.41L10.830 12z"/></svg>
<div class="abs" style="left:515px;top:147px;width:1097px;height:619px;background:#fff;border:1px solid #c0c0c0;border-right:none"></div>
<svg class="ic" style="left:516px;top:148px;width:1096px;height:640px;overflow:visible" viewBox="516 148 1096 640">
<path d="M1016.5 312.5h280l-140 280z" fill="#e7e6e6" stroke="#44546a" stroke-width="1.150"/>
<path d="M1034.7 330.7h280l-140 280z" fill="#e7e6e6" stroke="#44546a" stroke-width="1.150"/>
<path d="M1052.9 348.9h280l-140 280z" fill="#e7e6e6" stroke="#44546a" stroke-width="1.150"/>
<path d="M1071.1 367.1h280l-140 280z" fill="#e7e6e6" stroke="#44546a" stroke-width="1.150"/>
<path d="M1089.3 385.3h280l-140 280z" fill="#e7e6e6" stroke="#44546a" stroke-width="1.150"/>
<path d="M1107.5 403.5h280l-140 280z" fill="#e7e6e6" stroke="#44546a" stroke-width="1.150"/>
<path d="M1125.7 421.7h280l-140 280z" fill="#e7e6e6" stroke="#44546a" stroke-width="1.150"/>
<path d="M1143.9 439.9h280l-140 280z" fill="#e7e6e6" stroke="#44546a" stroke-width="1.150"/>
<path d="M1162.1 458.1h280l-140 280z" fill="#e7e6e6" stroke="#44546a" stroke-width="1.150"/>
<path d="M1180.3 476.3h280l-140 280z" fill="none" stroke="#bdd4fb" stroke-width="6.500" stroke-linejoin="round"/>
<path d="M1180.3 476.3h280l-140 280z" fill="#e7e6e6" stroke="#44546a" stroke-width="1.150"/>
<rect x="1180.500" y="476.500" width="280" height="280" fill="none" stroke="#1a73e8" stroke-width="1.300"/>
<path d="M1320.500 757v26" stroke="#1a73e8" stroke-width="1.500"/>
<path d="M1316.300 785.500a4.300 4.300 0 0 1 8.400 0z" fill="#1a73e8"/>
<rect x="1175.5" y="471.5" width="10" height="10" fill="#1a73e8" stroke="#fff" stroke-width="1"/>
<rect x="1175.5" y="611.5" width="10" height="10" fill="#1a73e8" stroke="#fff" stroke-width="1"/>
<rect x="1175.5" y="751.5" width="10" height="10" fill="#1a73e8" stroke="#fff" stroke-width="1"/>
<rect x="1455.5" y="611.5" width="10" height="10" fill="#1a73e8" stroke="#fff" stroke-width="1"/>
<rect x="1455.5" y="751.5" width="10" height="10" fill="#1a73e8" stroke="#fff" stroke-width="1"/>
<rect x="1455.5" y="471.5" width="10" height="10" fill="#1a73e8" stroke="#fff" stroke-width="1"/>
<rect x="1315.5" y="471.5" width="10" height="10" fill="#1a73e8" stroke="#fff" stroke-width="1"/>
<rect x="1316" y="752" width="9" height="9" fill="#1a73e8"/>
<path d="M1320.500 750.800l5.800 5.800-5.800 5.800-5.800-5.800z" fill="#f9ab00" stroke="#7a5200" stroke-width=".9"/>
</svg>
<div class="abs" style="left:1033px;top:790px;width:60px;height:2px;background:#5f6368"></div>
<div class="abs" style="left:295px;top:817px;width:1535px;height:59.500px;border-radius:10px;background:#edf2fa"></div>
<div class="t k nt" style="left:314.13px;top:833.71px;font-size:18px;line-height:20.68px;color:#111;font-weight:400;letter-spacing:0.190px;">Click to add speaker notes</div>
<div class="abs" style="left:1218px;top:110px;width:301px;height:411.500px;background:#fff;border-radius:5px;box-shadow:0 3px 10px 3px rgba(60,64,67,.13),0 1px 3px rgba(60,64,67,.14)"></div>
<div class="t k pt1" style="left:1237.94px;top:130.30px;font-size:12.6px;line-height:14.48px;color:#444746;font-weight:400;letter-spacing:1.123px;-webkit-text-stroke:.5px #3c4043;transform:scaleY(1.03);transform-origin:0 79%;">OFFICE THEME</div>
<div class="t k pt2" style="left:1237.95px;top:213.60px;font-size:12.6px;line-height:14.48px;color:#444746;font-weight:400;letter-spacing:1.536px;-webkit-text-stroke:.5px #3c4043;transform:scaleY(1.03);transform-origin:0 79%;">CUSTOM</div>
<svg class="ic" style="left:1475.00px;top:126.00px;width:19px;height:19px" viewBox="0 0 24 24" fill="#444746" ><path d="M3 17.250V21h3.750L17.810 9.940l-3.750-3.750L3 17.250zM20.710 7.040c.390-.390.390-1.020 0-1.410l-2.340-2.340c-.390-.390-1.020-.390-1.410 0l-1.830 1.830 3.750 3.750 1.830-1.830z"/></svg>
<div class="abs" style="left:1232px;top:194px;width:273px;height:1px;background:#dadce0"></div>
<div class="abs" style="left:1232px;top:276px;width:273px;height:1px;background:#dadce0"></div>
<div class="abs" style="left:1233.00px;top:157.10px;width:24.8px;height:24.8px;border-radius:50%;background:#000000;"></div>
<div class="abs" style="left:1260.25px;top:157.10px;width:24.8px;height:24.8px;border-radius:50%;background:#ffffff;box-shadow:inset 0 0 0 1px #dadce0;"></div>
<div class="abs" style="left:1287.50px;top:157.10px;width:24.8px;height:24.8px;border-radius:50%;background:#44546a;"></div>
<div class="abs" style="left:1314.75px;top:157.10px;width:24.8px;height:24.8px;border-radius:50%;background:#e7e6e6;box-shadow:inset 0 0 0 1px #dadce0;"></div>
<div class="abs" style="left:1342.00px;top:157.10px;width:24.8px;height:24.8px;border-radius:50%;background:#4472c4;"></div>
<div class="abs" style="left:1369.25px;top:157.10px;width:24.8px;height:24.8px;border-radius:50%;background:#ed7d31;"></div>
<div class="abs" style="left:1396.50px;top:157.10px;width:24.8px;height:24.8px;border-radius:50%;background:#a5a5a5;"></div>
<div class="abs" style="left:1423.75px;top:157.10px;width:24.8px;height:24.8px;border-radius:50%;background:#ffc000;"></div>
<div class="abs" style="left:1451.00px;top:157.10px;width:24.8px;height:24.8px;border-radius:50%;background:#5b9bd5;"></div>
<div class="abs" style="left:1478.25px;top:157.10px;width:24.8px;height:24.8px;border-radius:50%;background:#70ad47;"></div>
<div class="abs" style="left:1233.00px;top:239.00px;width:24.8px;height:24.8px;border-radius:50%;background:#8c8c8c;"></div>
<div class="abs" style="left:1260.25px;top:239.00px;width:24.8px;height:24.8px;border-radius:50%;background:#1b2d50;"></div>
<svg class="ic" style="left:1289.750px;top:239.600px;width:20px;height:20px" viewBox="0 0 20 20" fill="none" stroke="#444746" stroke-width="1.600"><circle cx="10" cy="10" r="8.400"/><path d="M5.300 10h9.400M10 5.300v9.400"/></svg>
<svg class="ic" style="left:1317px;top:239.750px;width:20px;height:20px" viewBox="0 0 20 20" fill="none" stroke="#444746" stroke-width="1.500" stroke-linejoin="round"><path d="M10.900 5.600L2.300 14.200v3.500h3.500l8.600-8.600z"/><path d="M9.300 4.200l6.500 6.500" stroke-width="1.700"/><path d="M12.300 7.700l3.100-3.100a1.600 1.600 0 0 1 2.300 0l.0.0a1.600 1.600 0 0 1 0 2.300l-3.100 3.100z" fill="#444746" fill-opacity=".0"/></svg>
<div class="abs" style="left:1233.00px;top:290.90px;width:24.8px;height:24.8px;border-radius:50%;background:#000000;"></div>
<div class="abs" style="left:1260.25px;top:290.90px;width:24.8px;height:24.8px;border-radius:50%;background:#434343;"></div>
<div class="abs" style="left:1287.50px;top:290.90px;width:24.8px;height:24.8px;border-radius:50%;background:#666666;"></div>
<div class="abs" style="left:1314.75px;top:290.90px;width:24.8px;height:24.8px;border-radius:50%;background:#999999;"></div>
<div class="abs" style="left:1342.00px;top:290.90px;width:24.8px;height:24.8px;border-radius:50%;background:#b7b7b7;"></div>
<div class="abs" style="left:1369.25px;top:290.90px;width:24.8px;height:24.8px;border-radius:50%;background:#cccccc;"></div>
<div class="abs" style="left:1396.50px;top:290.90px;width:24.8px;height:24.8px;border-radius:50%;background:#d9d9d9;"></div>
<div class="abs" style="left:1423.75px;top:290.90px;width:24.8px;height:24.8px;border-radius:50%;background:#efefef;box-shadow:inset 0 0 0 1px #dadce0;"></div>
<div class="abs" style="left:1451.00px;top:290.90px;width:24.8px;height:24.8px;border-radius:50%;background:#f3f3f3;box-shadow:inset 0 0 0 1px #dadce0;"></div>
<div class="abs" style="left:1478.25px;top:290.90px;width:24.8px;height:24.8px;border-radius:50%;background:#ffffff;box-shadow:inset 0 0 0 1px #dadce0;"></div>
<div class="abs" style="left:1233.00px;top:318.05px;width:24.8px;height:24.8px;border-radius:50%;background:#980000;"></div>
<div class="abs" style="left:1260.25px;top:318.05px;width:24.8px;height:24.8px;border-radius:50%;background:#ff0000;"></div>
<div class="abs" style="left:1287.50px;top:318.05px;width:24.8px;height:24.8px;border-radius:50%;background:#ff9900;"></div>
<div class="abs" style="left:1314.75px;top:318.05px;width:24.8px;height:24.8px;border-radius:50%;background:#ffff00;"></div>
<div class="abs" style="left:1342.00px;top:318.05px;width:24.8px;height:24.8px;border-radius:50%;background:#00ff00;"></div>
<div class="abs" style="left:1369.25px;top:318.05px;width:24.8px;height:24.8px;border-radius:50%;background:#00ffff;"></div>
<div class="abs" style="left:1396.50px;top:318.05px;width:24.8px;height:24.8px;border-radius:50%;background:#4a86e8;"></div>
<div class="abs" style="left:1423.75px;top:318.05px;width:24.8px;height:24.8px;border-radius:50%;background:#0000ff;"></div>
<div class="abs" style="left:1451.00px;top:318.05px;width:24.8px;height:24.8px;border-radius:50%;background:#9900ff;"></div>
<div class="abs" style="left:1478.25px;top:318.05px;width:24.8px;height:24.8px;border-radius:50%;background:#ff00ff;"></div>
<div class="abs" style="left:1233.00px;top:345.20px;width:24.8px;height:24.8px;border-radius:50%;background:#e6b8af;box-shadow:inset 0 0 0 1px #dadce0;"></div>
<div class="abs" style="left:1260.25px;top:345.20px;width:24.8px;height:24.8px;border-radius:50%;background:#f4cccc;box-shadow:inset 0 0 0 1px #dadce0;"></div>
<div class="abs" style="left:1287.50px;top:345.20px;width:24.8px;height:24.8px;border-radius:50%;background:#fce5cd;box-shadow:inset 0 0 0 1px #dadce0;"></div>
<div class="abs" style="left:1314.75px;top:345.20px;width:24.8px;height:24.8px;border-radius:50%;background:#fff2cc;box-shadow:inset 0 0 0 1px #dadce0;"></div>
<div class="abs" style="left:1342.00px;top:345.20px;width:24.8px;height:24.8px;border-radius:50%;background:#d9ead3;box-shadow:inset 0 0 0 1px #dadce0;"></div>
<div class="abs" style="left:1369.25px;top:345.20px;width:24.8px;height:24.8px;border-radius:50%;background:#d0e0e3;box-shadow:inset 0 0 0 1px #dadce0;"></div>
<div class="abs" style="left:1396.50px;top:345.20px;width:24.8px;height:24.8px;border-radius:50%;background:#c9daf8;box-shadow:inset 0 0 0 1px #dadce0;"></div>
<div class="abs" style="left:1423.75px;top:345.20px;width:24.8px;height:24.8px;border-radius:50%;background:#cfe2f3;box-shadow:inset 0 0 0 1px #dadce0;"></div>
<div class="abs" style="left:1451.00px;top:345.20px;width:24.8px;height:24.8px;border-radius:50%;background:#d9d2e9;box-shadow:inset 0 0 0 1px #dadce0;"></div>
<div class="abs" style="left:1478.25px;top:345.20px;width:24.8px;height:24.8px;border-radius:50%;background:#ead1dc;box-shadow:inset 0 0 0 1px #dadce0;"></div>
<div class="abs" style="left:1233.00px;top:372.35px;width:24.8px;height:24.8px;border-radius:50%;background:#dd7e6b;"></div>
<div class="abs" style="left:1260.25px;top:372.35px;width:24.8px;height:24.8px;border-radius:50%;background:#ea9999;"></div>
<div class="abs" style="left:1287.50px;top:372.35px;width:24.8px;height:24.8px;border-radius:50%;background:#f9cb9c;"></div>
<div class="abs" style="left:1314.75px;top:372.35px;width:24.8px;height:24.8px;border-radius:50%;background:#ffe599;"></div>
<div class="abs" style="left:1342.00px;top:372.35px;width:24.8px;height:24.8px;border-radius:50%;background:#b6d7a8;"></div>
<div class="abs" style="left:1369.25px;top:372.35px;width:24.8px;height:24.8px;border-radius:50%;background:#a2c4c9;"></div>
<div class="abs" style="left:1396.50px;top:372.35px;width:24.8px;height:24.8px;border-radius:50%;background:#a4c2f4;"></div>
<div class="abs" style="left:1423.75px;top:372.35px;width:24.8px;height:24.8px;border-radius:50%;background:#9fc5e8;"></div>
<div class="abs" style="left:1451.00px;top:372.35px;width:24.8px;height:24.8px;border-radius:50%;background:#b4a7d6;"></div>
<div class="abs" style="left:1478.25px;top:372.35px;width:24.8px;height:24.8px;border-radius:50%;background:#d5a6bd;"></div>
<div class="abs" style="left:1233.00px;top:399.50px;width:24.8px;height:24.8px;border-radius:50%;background:#cc4125;"></div>
<div class="abs" style="left:1260.25px;top:399.50px;width:24.8px;height:24.8px;border-radius:50%;background:#e06666;"></div>
<div class="abs" style="left:1287.50px;top:399.50px;width:24.8px;height:24.8px;border-radius:50%;background:#f6b26b;"></div>
<div class="abs" style="left:1314.75px;top:399.50px;width:24.8px;height:24.8px;border-radius:50%;background:#ffd966;"></div>
<div class="abs" style="left:1342.00px;top:399.50px;width:24.8px;height:24.8px;border-radius:50%;background:#93c47d;"></div>
<div class="abs" style="left:1369.25px;top:399.50px;width:24.8px;height:24.8px;border-radius:50%;background:#76a5af;"></div>
<div class="abs" style="left:1396.50px;top:399.50px;width:24.8px;height:24.8px;border-radius:50%;background:#6d9eeb;"></div>
<div class="abs" style="left:1423.75px;top:399.50px;width:24.8px;height:24.8px;border-radius:50%;background:#6fa8dc;"></div>
<div class="abs" style="left:1451.00px;top:399.50px;width:24.8px;height:24.8px;border-radius:50%;background:#8e7cc3;"></div>
<div class="abs" style="left:1478.25px;top:399.50px;width:24.8px;height:24.8px;border-radius:50%;background:#c27ba0;"></div>
<div class="abs" style="left:1233.00px;top:426.65px;width:24.8px;height:24.8px;border-radius:50%;background:#a61c00;"></div>
<div class="abs" style="left:1260.25px;top:426.65px;width:24.8px;height:24.8px;border-radius:50%;background:#cc0000;"></div>
<div class="abs" style="left:1287.50px;top:426.65px;width:24.8px;height:24.8px;border-radius:50%;background:#e69138;"></div>
<div class="abs" style="left:1314.75px;top:426.65px;width:24.8px;height:24.8px;border-radius:50%;background:#f1c232;"></div>
<div class="abs" style="left:1342.00px;top:426.65px;width:24.8px;height:24.8px;border-radius:50%;background:#6aa84f;"></div>
<div class="abs" style="left:1369.25px;top:426.65px;width:24.8px;height:24.8px;border-radius:50%;background:#45818e;"></div>
<div class="abs" style="left:1396.50px;top:426.65px;width:24.8px;height:24.8px;border-radius:50%;background:#3c78d8;"></div>
<div class="abs" style="left:1423.75px;top:426.65px;width:24.8px;height:24.8px;border-radius:50%;background:#3d85c6;"></div>
<div class="abs" style="left:1451.00px;top:426.65px;width:24.8px;height:24.8px;border-radius:50%;background:#674ea7;"></div>
<div class="abs" style="left:1478.25px;top:426.65px;width:24.8px;height:24.8px;border-radius:50%;background:#a64d79;"></div>
<div class="abs" style="left:1233.00px;top:453.80px;width:24.8px;height:24.8px;border-radius:50%;background:#85200c;"></div>
<div class="abs" style="left:1260.25px;top:453.80px;width:24.8px;height:24.8px;border-radius:50%;background:#990000;"></div>
<div class="abs" style="left:1287.50px;top:453.80px;width:24.8px;height:24.8px;border-radius:50%;background:#b45f06;"></div>
<div class="abs" style="left:1314.75px;top:453.80px;width:24.8px;height:24.8px;border-radius:50%;background:#bf9000;"></div>
<div class="abs" style="left:1342.00px;top:453.80px;width:24.8px;height:24.8px;border-radius:50%;background:#38761d;"></div>
<div class="abs" style="left:1369.25px;top:453.80px;width:24.8px;height:24.8px;border-radius:50%;background:#134f5c;"></div>
<div class="abs" style="left:1396.50px;top:453.80px;width:24.8px;height:24.8px;border-radius:50%;background:#1155cc;"></div>
<div class="abs" style="left:1423.75px;top:453.80px;width:24.8px;height:24.8px;border-radius:50%;background:#0b5394;"></div>
<div class="abs" style="left:1451.00px;top:453.80px;width:24.8px;height:24.8px;border-radius:50%;background:#351c75;"></div>
<div class="abs" style="left:1478.25px;top:453.80px;width:24.8px;height:24.8px;border-radius:50%;background:#741b47;"></div>
<div class="abs" style="left:1233.00px;top:480.95px;width:24.8px;height:24.8px;border-radius:50%;background:#5b0f00;"></div>
<div class="abs" style="left:1260.25px;top:480.95px;width:24.8px;height:24.8px;border-radius:50%;background:#660000;"></div>
<div class="abs" style="left:1287.50px;top:480.95px;width:24.8px;height:24.8px;border-radius:50%;background:#783f04;"></div>
<div class="abs" style="left:1314.75px;top:480.95px;width:24.8px;height:24.8px;border-radius:50%;background:#7f6000;"></div>
<div class="abs" style="left:1342.00px;top:480.95px;width:24.8px;height:24.8px;border-radius:50%;background:#274e13;"></div>
<div class="abs" style="left:1369.25px;top:480.95px;width:24.8px;height:24.8px;border-radius:50%;background:#0c343d;"></div>
<div class="abs" style="left:1396.50px;top:480.95px;width:24.8px;height:24.8px;border-radius:50%;background:#1c4587;"></div>
<div class="abs" style="left:1423.75px;top:480.95px;width:24.8px;height:24.8px;border-radius:50%;background:#073763;"></div>
<div class="abs" style="left:1451.00px;top:480.95px;width:24.8px;height:24.8px;border-radius:50%;background:#20124d;"></div>
<div class="abs" style="left:1478.25px;top:480.95px;width:24.8px;height:24.8px;border-radius:50%;background:#4c1130;"></div>
<svg class="ic" style="left:1236.4px;top:294.3px;width:18px;height:18px" viewBox="0 0 24 24" fill="none" stroke="#fff" stroke-width="2.600"><path d="M3.500 13l5.500 5.500L21.500 6"/></svg>
<svg class="ic" style="left:1873.800px;top:81.800px;width:23px;height:23.300px" viewBox="0 0 24 24" preserveAspectRatio="none">
<rect x="4.500" y="4.500" width="15" height="15" fill="#fff"/>
<path d="M0 2a2 2 0 0 1 2-2h17v5H5v14H0z" fill="#4285f4"/><path d="M19 0H22a2 2 0 0 1 2 2v3h-5z" fill="#1967d2"/>
<path d="M19 5H24v14h-5z" fill="#fbbc04"/><path d="M5 19h14V24h-14z" fill="#34a853"/><path d="M0 19h5V24H2a2 2 0 0 1-2-2z" fill="#188038"/><path d="M19 19H24L19 24z" fill="#ea4335"/>
<text x="12" y="16" font-family="Liberation Sans, sans-serif" font-size="10.800" fill="#4285f4" text-anchor="middle" letter-spacing="-.2">31</text></svg>
<svg class="ic" style="left:1873.400px;top:151.400px;width:24px;height:24px" viewBox="0 0 24 24">
<rect width="24" height="24" rx="2.200" fill="#fbbc04"/><path d="M12 5.200a5.100 5.100 0 0 0-2.600 9.500v1.100h5.200v-1.100A5.100 5.100 0 0 0 12 5.200z" fill="#fff"/><rect x="9.400" y="17" width="5.200" height="1.700" fill="#fff"/></svg>
<svg class="ic" style="left:1874px;top:221px;width:24px;height:24px" viewBox="0 0 24 24" fill="none">
<circle cx="11.300" cy="12.800" r="8.300" stroke="#2684fc" stroke-width="3.900"/><path d="M6.900 12.200l3.400 3.400 6.300-6.700" stroke="#2684fc" stroke-width="3.300"/>
<path d="M15.300 6.900l4.300-4.300a1 1 0 0 1 1.400 0l1 1a1 1 0 0 1 0 1.400l-4.300 4.300z" fill="#0b57d0"/></svg>
<svg class="ic" style="left:1874px;top:290px;width:24px;height:26px" viewBox="1874 290 24 26">
<rect x="1877.200" y="302.700" width="16.800" height="10.700" rx="4.300" fill="#8ab4f8"/><rect x="1879.800" y="302.700" width="12.500" height="10.700" rx="4" fill="#0b57d0"/><circle cx="1885.400" cy="297.300" r="4.300" fill="#0b57d0"/></svg>
<svg class="ic" style="left:1877.600px;top:361.900px;width:16.200px;height:23.200px" viewBox="0 0 17.500 25">
<defs><clipPath id="pin"><path d="M8.750 0A8.750 8.750 0 0 0 0 8.750C0 13 3.500 15.500 6.500 20.500 7.500 22.200 8 24 8.750 25 9.500 24 10 22.200 11 20.500 14 15.500 17.500 13 17.500 8.750A8.750 8.750 0 0 0 8.750 0z"/></clipPath></defs>
<g clip-path="url(#pin)"><rect width="17.500" height="25" fill="#34a853"/><path d="M0 0h17.500v6L8.750 8.750 3 2z" fill="#1a73e8"/><path d="M8.750 8.750L17.500 0v9z" fill="#4285f4" opacity=".0"/><path d="M0 0h5l3.750 8.750L0 12z" fill="#ea4335"/><path d="M0 11l8.750-2.250L3 19H0z" fill="#fbbc04"/><path d="M12 0h5.500v7L8.750 8.750z" fill="#4285f4"/></g>
<circle cx="8.750" cy="8.750" r="3.200" fill="#fff"/></svg>
<div class="abs" style="left:1873px;top:429px;width:25px;height:1px;background:#dadce0"></div>
<svg class="ic" style="left:1872.00px;top:471.00px;width:27px;height:27px" viewBox="0 0 24 24" fill="#1f1f1f" ><path d="M19 13h-6v6h-2v-6H5v-2h6V5h2v6h6v2z"/></svg>
<svg class="ic" style="left:1872.00px;top:848.50px;width:27px;height:27px" viewBox="0 0 24 24" fill="#444746" ><path d="M10 6L8.59 7.41 13.17 12l-4.58 4.59L10 18l6-6z"/></svg>
</body></html>
